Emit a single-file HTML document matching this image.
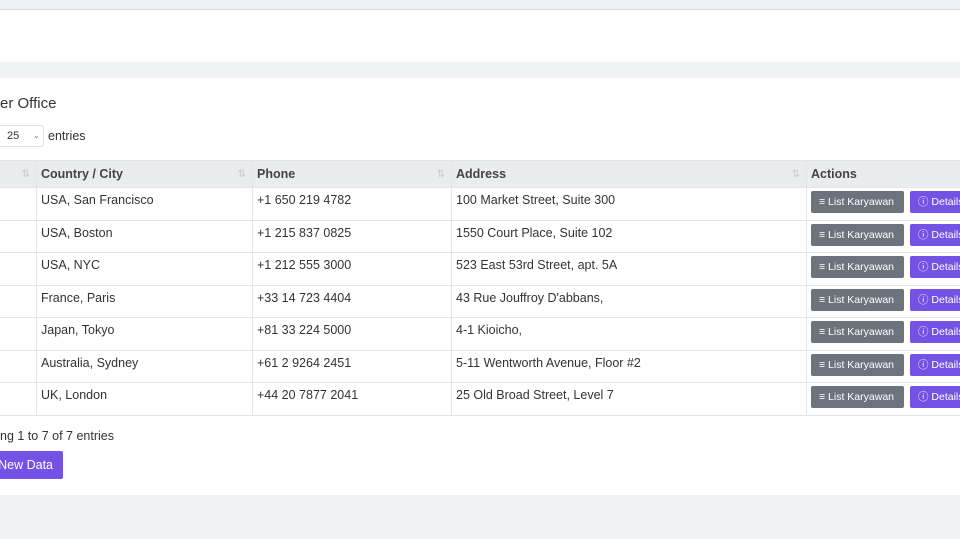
<!DOCTYPE html>
<html><head><style>
body{margin:0;width:960px;height:539px;overflow:hidden;background:#f1f2f5;font-family:"Liberation Sans",sans-serif;color:#333;position:relative}
.a{position:absolute}
table{border-collapse:collapse;position:absolute;left:-10px;top:160px;font-size:12.5px;table-layout:fixed;width:1016px}
td,th{border:1px solid #e3e5ea;padding:0 4px;text-align:left;vertical-align:top;white-space:nowrap;overflow:hidden}
th{background:#eaecf0;height:27px;box-sizing:border-box;vertical-align:middle;font-weight:bold;color:#444;position:relative}
td{height:32.5px;padding-top:5px;box-sizing:border-box}
td.x{padding-top:3px}
.s{position:absolute;right:6px;top:8px;color:#c7cad0;font-size:10px;font-weight:normal}
.b1,.b2{display:inline-block;color:#fff;font-size:10.5px;height:22px;line-height:22px;padding:0 0 0 8px;border-radius:2px;box-sizing:border-box;vertical-align:top}
.b1{background:#6c737d;width:93px}
.b2{background:#7452e6;margin-left:6px;width:60px}
</style></head><body>
<div class="a" style="left:0;top:0;width:960px;height:9px;background:#eef0f3"></div>
<div class="a" style="left:0;top:9px;width:960px;height:1px;background:#d9dbe0"></div>
<div class="a" style="left:0;top:10px;width:960px;height:52px;background:#fff"></div>
<div class="a" style="left:0;top:78px;width:960px;height:417px;background:#fff"></div>
<div class="a" style="left:0;top:95px;font-size:15px;color:#333">er Office</div>
<div class="a" style="left:-4px;top:125px;width:48px;height:22px;border:1px solid #dcdfe4;border-radius:3px;font-size:11px;line-height:20px;box-sizing:border-box;padding-left:10px">25 <span style="position:absolute;left:36px;font-size:8px;color:#777">⌄</span></div>
<div class="a" style="left:48px;top:129px;font-size:12.5px">entries</div>
<table>
<colgroup><col style="width:46px"><col style="width:216px"><col style="width:199px"><col style="width:355px"><col style="width:200px"></colgroup>
<tr><th><span class="s">⇅</span></th><th>Country / City<span class="s">⇅</span></th><th>Phone<span class="s">⇅</span></th><th>Address<span class="s">⇅</span></th><th>Actions</th></tr>
<tr><td></td><td>USA, San Francisco</td><td>+1 650 219 4782</td><td>100 Market Street, Suite 300</td><td class="x"><span class="b1">≡ List Karyawan</span><span class="b2">ⓘ Details</span></td></tr>
<tr><td></td><td>USA, Boston</td><td>+1 215 837 0825</td><td>1550 Court Place, Suite 102</td><td class="x"><span class="b1">≡ List Karyawan</span><span class="b2">ⓘ Details</span></td></tr>
<tr><td></td><td>USA, NYC</td><td>+1 212 555 3000</td><td>523 East 53rd Street, apt. 5A</td><td class="x"><span class="b1">≡ List Karyawan</span><span class="b2">ⓘ Details</span></td></tr>
<tr><td></td><td>France, Paris</td><td>+33 14 723 4404</td><td>43 Rue Jouffroy D'abbans,</td><td class="x"><span class="b1">≡ List Karyawan</span><span class="b2">ⓘ Details</span></td></tr>
<tr><td></td><td>Japan, Tokyo</td><td>+81 33 224 5000</td><td>4-1 Kioicho,</td><td class="x"><span class="b1">≡ List Karyawan</span><span class="b2">ⓘ Details</span></td></tr>
<tr><td></td><td>Australia, Sydney</td><td>+61 2 9264 2451</td><td>5-11 Wentworth Avenue, Floor #2</td><td class="x"><span class="b1">≡ List Karyawan</span><span class="b2">ⓘ Details</span></td></tr>
<tr><td></td><td>UK, London</td><td>+44 20 7877 2041</td><td>25 Old Broad Street, Level 7</td><td class="x"><span class="b1">≡ List Karyawan</span><span class="b2">ⓘ Details</span></td></tr>
</table>
<div class="a" style="left:0;top:429px;font-size:12.5px">ng 1 to 7 of 7 entries</div>
<div class="a" style="left:-10px;top:451px;width:73px;height:28px;background:#7452e6;border-radius:2px;color:#fff;font-size:12.5px;line-height:28px;text-align:right;box-sizing:border-box;padding-right:10px">New Data</div>
</body></html>
